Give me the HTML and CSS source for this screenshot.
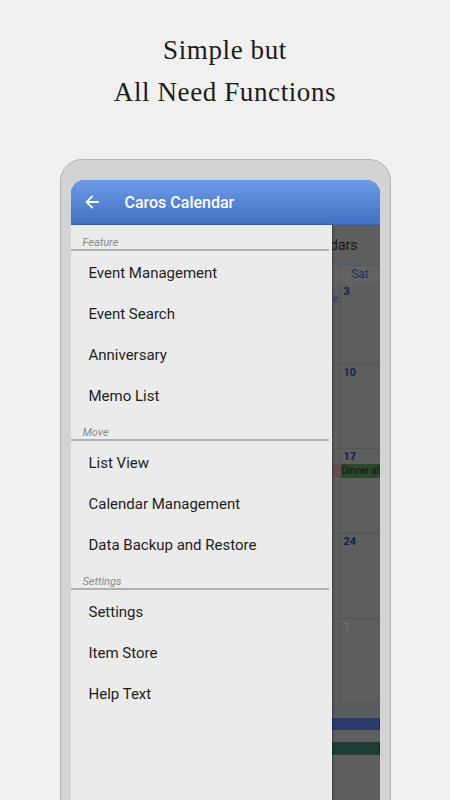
FILE: index.html
```html
<!DOCTYPE html>
<html lang="en">
<head>
<meta charset="utf-8">
<title>Caros Calendar</title>
<link rel="stylesheet" href="styles.css">
</head>
<body>
<div class="page">
  <h1 class="headline">Simple but<br>All Need Functions</h1>
  <div class="phone">
    <div class="screen">
      <header class="appbar">
        <svg class="back" width="14" height="14" viewBox="0 0 14 14" aria-hidden="true">
          <path d="M13 7H2M7 1.5L1.5 7L7 12.5" fill="none" stroke="#fff" stroke-width="1.8" stroke-linecap="square"/>
        </svg>
        <span class="apptitle">Caros Calendar</span>
      </header>
      <div class="body">
        <div class="calendar">
          <div class="toolbar"><span>Calendars</span></div>
          <div class="weekdays">
            <span></span><span></span><span></span><span></span><span></span><span></span><span>Sat</span>
          </div>
          <div class="weeks">
            <div class="week w1">
              <div class="cell"></div><div class="cell"></div><div class="cell"></div><div class="cell"></div><div class="cell"></div>
              <div class="cell"><span class="ev-text">ne</span></div>
              <div class="cell last"><span class="date">3</span></div>
            </div>
            <div class="week w2">
              <div class="cell"></div><div class="cell"></div><div class="cell"></div><div class="cell"></div><div class="cell"></div><div class="cell"></div>
              <div class="cell last"><span class="date">10</span></div>
            </div>
            <div class="week w3">
              <div class="cell"></div><div class="cell"></div><div class="cell"></div><div class="cell"></div><div class="cell"></div>
              <div class="cell"><span class="date"></span><span class="bar pink"></span></div>
              <div class="cell last"><span class="date">17</span><span class="bar green">Dinner at</span></div>
            </div>
            <div class="week w4">
              <div class="cell"></div><div class="cell"></div><div class="cell"></div><div class="cell"></div><div class="cell"></div><div class="cell"></div>
              <div class="cell last"><span class="date">24</span></div>
            </div>
            <div class="week w5">
              <div class="cell"></div><div class="cell"></div><div class="cell"></div><div class="cell"></div><div class="cell"></div><div class="cell"></div>
              <div class="cell last"><span class="date other">1</span></div>
            </div>
          </div>
          <div class="agenda">
            <div class="band"></div>
            <div class="strip blue"></div>
            <div class="gap"></div>
            <div class="strip green"></div>
          </div>
        </div>
        <nav class="drawer">
          <div class="section">Feature</div>
          <div class="item">Event Management</div>
          <div class="item">Event Search</div>
          <div class="item">Anniversary</div>
          <div class="item">Memo List</div>
          <div class="section">Move</div>
          <div class="item">List View</div>
          <div class="item">Calendar Management</div>
          <div class="item">Data Backup and Restore</div>
          <div class="section">Settings</div>
          <div class="item">Settings</div>
          <div class="item">Item Store</div>
          <div class="item">Help Text</div>
        </nav>
      </div>
    </div>
  </div>
</div>
</body>
</html>
```
FILE: styles.css
```css
* { box-sizing: border-box; }
html, body {
  margin: 0;
  padding: 0;
  background: #f0f0f0;
  height: 800px;
  overflow: hidden;
}
.page {
  width: 450px;
  height: 800px;
  overflow: hidden;
  padding-top: 29px;
}
.headline {
  margin: 0;
  font-family: "Liberation Serif", "DejaVu Serif", serif;
  font-weight: normal;
  font-size: 27px;
  letter-spacing: 0.6px;
  line-height: 42px;
  text-align: center;
  color: #1b1b1b;
}
.phone {
  width: 331px;
  height: 700px;
  margin: 46px auto 0;
  padding: 20px 10px 0 10px;
  background: #d3d3d3;
  border: 1.5px solid #b4b4b4;
  border-radius: 22px 22px 0 0;
}
.screen {
  width: 309px;
  height: 680px;
  border-radius: 14px 14px 0 0;
  overflow: hidden;
  background: #5e5e5e;
  display: flex;
  flex-direction: column;
}
.appbar {
  height: 45px;
  flex: none;
  display: flex;
  align-items: center;
  padding-left: 14px;
  background: linear-gradient(#6d9ce8, #4170c2);
  border-bottom: 1px solid #3d68b0;
}
.back { flex: none; }
.apptitle {
  margin-left: 26px;
  font-family: Roboto, "Liberation Sans", sans-serif;
  font-weight: 500;
  font-size: 16px;
  color: #fff;
}
.body {
  position: relative;
  flex: 1;
  font-family: Roboto, "Liberation Sans", sans-serif;
}
.calendar {
  display: flex;
  flex-direction: column;
}
.toolbar {
  height: 40px;
  display: flex;
  align-items: center;
  justify-content: flex-end;
  padding-right: 22px;
  background: #5e5e5e;
  font-size: 14px;
  color: #161616;
}
.weekdays {
  height: 19px;
  display: grid;
  grid-template-columns: repeat(6, 45px) 1fr;
  border-top: 1px solid #4d5c6b;
  background: #636363;
  font-size: 12px;
  line-height: 17px;
  color: #22305e;
  text-align: center;
}
.weekdays span { border-right: 1px solid #575757; }
.weekdays span:last-child { border-right: none; }
.weeks {
  display: grid;
  grid-template-rows: 80px 84px 85px 85px 84px;
}
.week {
  display: grid;
  grid-template-columns: repeat(6, 45px) 1fr;
  border-top: 1px solid #535353;
}
.week.w1 { border-top: none; }
.cell {
  border-right: 1px solid #535353;
  display: flex;
  flex-direction: column;
  align-items: flex-start;
  overflow: hidden;
  padding-top: 1px;
}
.cell.last { border-right: none; padding-left: 3px; }
.date {
  font-size: 11px;
  font-weight: bold;
  line-height: 13px;
  height: 13px;
  color: #14214d;
}
.date.other { font-weight: normal; color: #767676; }
.ev-text {
  align-self: flex-end;
  margin-top: 7px;
  padding-right: 1px;
  font-size: 11px;
  line-height: 13px;
  color: #34347f;
}
.bar {
  margin-top: 1px;
  height: 14px;
  font-size: 10px;
  letter-spacing: -0.2px;
  line-height: 14px;
  white-space: nowrap;
}
.bar.pink { align-self: stretch; background: #6a4854; }
.bar.green {
  align-self: stretch;
  margin-left: -3px;
  padding-left: 1px;
  background: #2b482c;
  color: #0d170d;
}
.agenda { display: flex; flex-direction: column; }
.band { height: 16px; background: linear-gradient(#565b5f, #5b5d5f); }
.strip { height: 12px; }
.strip.blue { background: #2c3c6b; border-right: 1px solid #1c2852; }
.gap { height: 12px; background: #5e5e5e; }
.strip.green { height: 13px; background: #1e3d35; border-right: 1px solid #132e28; }
.drawer {
  position: absolute;
  top: 0;
  left: 0;
  bottom: 0;
  width: 261px;
  background: #ebebeb;
  box-shadow: 1px 0 2px rgba(0, 0, 0, 0.35);
}
.section {
  height: 26px;
  margin-right: 3px;
  padding: 11px 0 0 12px;
  font-size: 11px;
  line-height: 13px;
  font-style: italic;
  color: #8a8a8a;
  border-bottom: 2px solid #b0b0b0;
}
.item {
  height: 41px;
  padding: 4px 0 0 18px;
  font-size: 15px;
  line-height: 37px;
  color: #1e1e1e;
}
```
